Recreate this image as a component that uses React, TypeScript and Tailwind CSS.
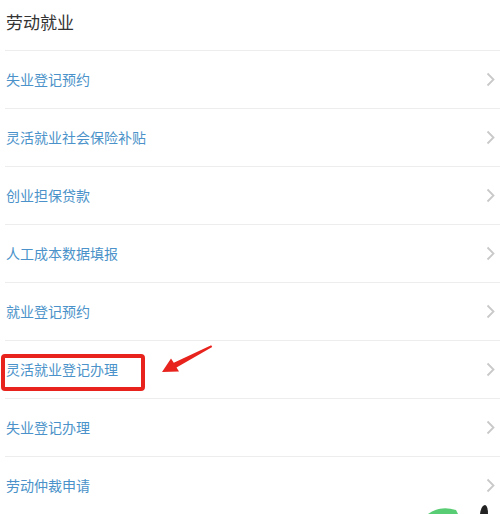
const items = [
  '失业登记预约',
  '灵活就业社会保险补贴',
  '创业担保贷款',
  '人工成本数据填报',
  '就业登记预约',
  '灵活就业登记办理',
  '失业登记办理',
  '劳动仲裁申请',
];

const Chevron = () => (
  <svg width="9" height="15" viewBox="0 0 9 15" className="shrink-0">
    <polyline points="1.5,1.5 7.5,7.5 1.5,13.5" fill="none" stroke="#c9c9c9" strokeWidth="1.8" />
  </svg>
);

export default function App() {
  return (
    <div
      className="relative h-[514px] w-[500px] overflow-hidden bg-white"
      style={{ fontFamily: '"Noto Sans CJK SC", "Noto Sans", sans-serif' }}
    >
      <div className="flex h-[50px] items-center pl-[6px] pb-[6px] text-[17px] text-[#333]">劳动就业</div>

      <ul className="ml-[5px]">
        {items.map((label) => (
          <li
            key={label}
            className="flex h-[58px] items-center justify-between border-t border-[#ededed] pl-[1px] pr-[5px] text-[14px] text-[#4a92c9]"
          >
            <span>{label}</span>
            <Chevron />
          </li>
        ))}
      </ul>

      {/* annotation */}
      <div className="absolute left-[1px] top-[354px] h-[37px] w-[144px] rounded-[4px] border-[4px] border-[#e8231d]" />
      <svg className="absolute left-0 top-0" width="500" height="514" viewBox="0 0 500 514">
        <polygon
          points="162,372 179,371.5 176.5,367.6 212.2,347 211.2,345.2 173.8,362.8 171,358.5"
          fill="#e8231d"
        />
        <path d="M428 514 Q440 505 456 510 L458 514 Z" fill="#3cc45a" opacity="0.85" />
        <path d="M480 514 Q481 506 485 505 Q488 506 488 514 Z" fill="#222" />
      </svg>
    </div>
  );
}
